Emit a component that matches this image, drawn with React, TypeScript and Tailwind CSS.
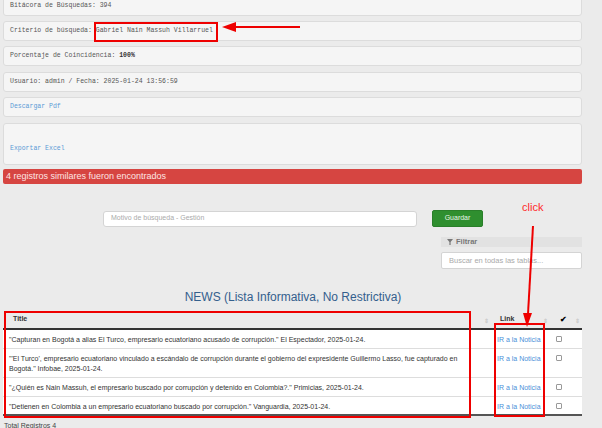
import React from "react";

const rows = [
  {
    title:
      "\"Capturan en Bogotá a alias El Turco, empresario ecuatoriano acusado de corrupción.\" El Espectador, 2025-01-24.",
    tall: false,
  },
  {
    title:
      "\"'El Turco', empresario ecuatoriano vinculado a escándalo de corrupción durante el gobierno del expresidente Guillermo Lasso, fue capturado en Bogotá.\" Infobae, 2025-01-24.",
    tall: true,
  },
  {
    title:
      "\"¿Quién es Nain Massuh, el empresario buscado por corrupción y detenido en Colombia?.\" Primicias, 2025-01-24.",
    tall: false,
  },
  {
    title:
      "\"Detienen en Colombia a un empresario ecuatoriano buscado por corrupción.\" Vanguardia, 2025-01-24.",
    tall: false,
  },
];

const Panel = ({
  children,
  className = "",
  color = "text-[#555]",
}: {
  children: React.ReactNode;
  className?: string;
  color?: string;
}) => (
  <div
    className={`flex items-center h-[20px] px-[6px] border border-[#dcdcdc] rounded-[3px] bg-[#f5f5f5] text-[6.5px] ${color} ${className}`}
  >
    {children}
  </div>
);

const SortIcon = () => <span className="text-[6px] text-[#ccc] leading-none">⇕</span>;

const App = () => {
  return (
    <div
      className="relative w-[602px] h-[428px] overflow-hidden bg-[#ebebeb]"
      style={{ fontFamily: '"Liberation Sans", Arial, sans-serif' }}
    >
      {/* info panels */}
      <div
        className="flex flex-col w-[579px] ml-[3px] mt-[-4px]"
        style={{ fontFamily: '"Liberation Mono", "Courier New", monospace' }}
      >
        <Panel>Bitácora de Búsquedas: 394</Panel>
        <Panel className="mt-[5px]">Criterio de búsqueda: Gabriel Nain Massuh Villarruel</Panel>
        <Panel className="mt-[5px]">
          Porcentaje de Coincidencia:&nbsp;<b className="text-[#333]">100%</b>
        </Panel>
        <Panel className="mt-[6px]">Usuario: admin / Fecha: 2025-01-24 13:56:59</Panel>
        <Panel className="mt-[5px]" color="text-[#5b9bd5]">
          Descargar Pdf
        </Panel>
        <Panel className="mt-[6px] h-[42px] pt-[9px]" color="text-[#5b9bd5]">
          Exportar Excel
        </Panel>
      </div>

      <div className="w-[579px] ml-[3px] mt-[4px] h-[15px] flex items-center px-[3px] rounded-[2px] bg-[#d64541] text-[#fde6e4] text-[9px]">
        4 registros similares fueron encontrados
      </div>

      {/* motivo + guardar */}
      <div className="flex items-center mt-[26px] ml-[103px]">
        <div className="w-[314px] h-[16px] flex items-center px-[7px] bg-white border border-[#d4d4d4] rounded-[3px] text-[7px] text-[#aaa]">
          Motivo de búsqueda - Gestión
        </div>
        <div className="ml-[15px] w-[51px] h-[17px] flex items-center justify-center bg-[#2f8f2f] border border-[#2a7f2a] rounded-[2px] text-[7px] text-[#e8f5e8]">
          Guardar
        </div>
      </div>

      {/* filtro */}
      <div className="ml-[441px] w-[141px] mt-[10px]">
        <div className="h-[10px] flex items-center gap-[3px] px-[6px] bg-[#e2e2e2] text-[7.5px] font-bold text-[#777]">
          <svg width="6" height="6" viewBox="0 0 10 10">
            <polygon points="0,0 10,0 6,5 6,10 4,10 4,5" fill="#777" />
          </svg>
          Filtrar
        </div>
        <div className="mt-[5px] h-[17px] flex items-center px-[7px] bg-white border border-[#d4d4d4] rounded-[2px] text-[7.5px] text-[#aaa]">
          Buscar en todas las tablas...
        </div>
      </div>

      <div className="mt-[22px] text-center text-[12px] leading-none text-[#34608d] w-[586px]">
        NEWS (Lista Informativa, No Restrictiva)
      </div>

      {/* table */}
      <table className="ml-[3px] mt-[8px] w-[579px] border-collapse text-[7px] text-[#333]">
        <thead>
          <tr className="border-b-2 border-[#333]">
            <th className="h-[18px] w-[488px] text-left font-bold pl-[10px] relative">
              Title
              <span className="absolute right-[2px] top-[5px]">
                <SortIcon />
              </span>
            </th>
            <th className="h-[18px] w-[59px] text-left font-bold pl-[9px] relative">
              Link
              <span className="absolute right-[2px] top-[5px]">
                <SortIcon />
              </span>
            </th>
            <th className="h-[18px] text-center font-bold relative">
              <span className="text-[8px] text-black pr-[6px]">✔</span>
              <span className="absolute right-[2px] top-[5px]">
                <SortIcon />
              </span>
            </th>
          </tr>
        </thead>
        <tbody className="bg-white">
          {rows.map((r, i) => {
            const h = r.tall ? "h-[29px]" : "h-[19px]";
            return (
              <tr
                key={i}
                className={i === rows.length - 1 ? "border-b-2 border-[#555]" : "border-b border-[#ddd]"}
              >
                <td className={`${h} align-top pl-[6px] pr-[20px] pt-[5px] leading-[10px]`}>{r.title}</td>
                <td className={`${h} align-top pl-[6px] pt-[5px] leading-[10px] text-[#4a90d9]`}>
                  IR a la Noticia
                </td>
                <td className={`${h} align-top pt-[6px] pl-[6px]`}>
                  <div className="w-[6px] h-[6px] border border-[#999] rounded-[1px] bg-white" />
                </td>
              </tr>
            );
          })}
        </tbody>
      </table>
      <div className="ml-[4px] mt-[5px] text-[7px] text-[#444]">Total Registros 4</div>

      {/* annotations */}
      <div className="absolute left-[522px] top-[202px] text-[11px] text-[#ff2a2a] leading-none">click</div>
      <svg className="absolute inset-0 pointer-events-none" width="602" height="428">
        <rect x="95" y="23" width="122" height="18" fill="none" stroke="#ee0000" strokeWidth="2" />
        <line x1="234" y1="27" x2="300" y2="27" stroke="#ee0000" strokeWidth="2" />
        <polygon points="222,27 236,22 236,32" fill="#ee0000" />
        <line x1="533" y1="226" x2="528" y2="314" stroke="#ee0000" strokeWidth="2" />
        <polygon points="527,327 523,313 532,313" fill="#ee0000" />
        <rect x="5" y="312" width="465" height="105" fill="none" stroke="#ee0000" strokeWidth="2" />
        <rect x="495" y="324" width="49" height="92" fill="none" stroke="#ee0000" strokeWidth="2" />
      </svg>
    </div>
  );
};

export default App;
